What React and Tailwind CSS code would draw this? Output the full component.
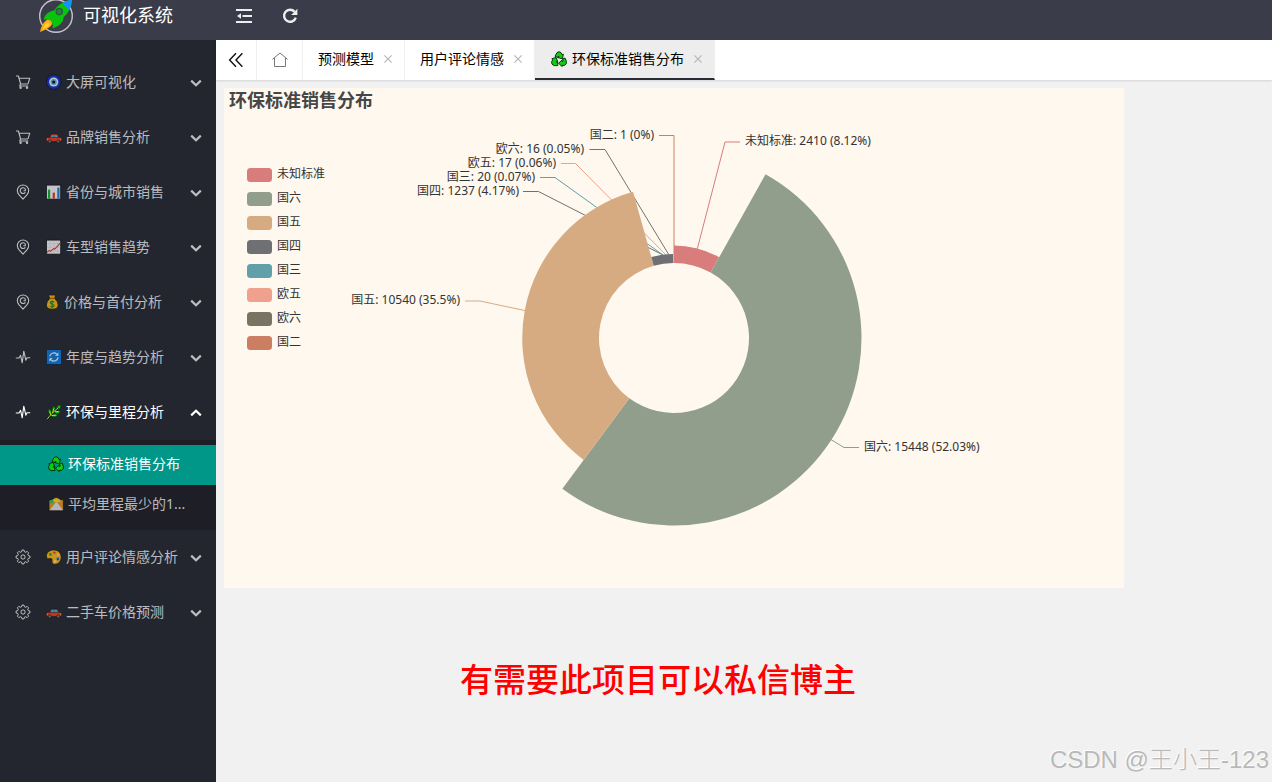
import React from "react";

function Emoji({ name, className = "" }) {
  return (
    <svg viewBox="0 0 16 16" className={`h-4 w-4 shrink-0 ${className}`} aria-hidden="true">
      {drawings[name]}
    </svg>
  );
}

const car = (
  <g stroke="#111" strokeWidth="0.6" strokeLinejoin="round">
    <path d="M3.2 8.6 L4.8 5.6 Q5.2 5 6 5 H10.6 Q11.2 5 11.7 5.6 L13.4 8.6 Z" fill="#f03a20" />
    <path d="M.4 10 Q.4 8.4 2 8.3 H13.6 Q15.7 8.6 15.7 10.6 V11.8 Q15.7 12.6 14.9 12.6 H1.2 Q.4 12.6 .4 11.8 Z" fill="#f03a20" />
    <path d="M4.8 8.2 L6 6 H7.6 V8.2 Z M8.4 8.2 V6 H10.4 L11.8 8.2 Z" fill="#25c3ee" stroke="none" />
    <circle cx="3.8" cy="12.4" r="1.5" fill="#777" />
    <circle cx="12.2" cy="12.4" r="1.5" fill="#777" />
    <path d="M.8 9.6h1.2v1H.8z M14.1 9.6h1.2v1h-1.2z" fill="#ffc83d" stroke="none" />
  </g>
);

const drawings = {
  nazar: (
    <g>
      <circle cx="7.7" cy="8" r="7.3" fill="#0d36c8" stroke="#0a0f30" strokeWidth="0.9" />
      <circle cx="7.7" cy="8" r="4.6" fill="#f4f8ff" />
      <circle cx="7.7" cy="8" r="3.1" fill="#5fb4ea" />
      <circle cx="7.7" cy="8" r="1.5" fill="#050505" />
    </g>
  ),
  car,
  bars: (
    <g>
      <rect x="0.5" y="1.1" width="14.2" height="14" fill="#fafafe" stroke="#111" strokeWidth="0.8" />
      <path d="M2 5.6h2.2v9H2z" fill="#19b52a" />
      <path d="M6.7 8.6h2.2v6H6.7z" fill="#e43b24" />
      <path d="M11.3 3.6h2.2v11h-2.2z" fill="#1d7fd4" />
    </g>
  ),
  trend: (
    <g>
      <rect x="0.5" y="1.1" width="14.2" height="14" fill="#fafafe" stroke="#111" strokeWidth="0.8" />
      <path d="M4.3 1.5v13.2M8 1.5v13.2M11.7 1.5v13.2M1 4.7h13.4M1 8.2h13.4M1 11.7h13.4" stroke="#d6d6dc" strokeWidth="0.5" />
      <path d="M1 13.4 L3.2 11.4 L4.6 12.4 L7.6 9.6 L9 9.8 L14.2 4.2" fill="none" stroke="#e43b24" strokeWidth="1.1" />
    </g>
  ),
  money: (
    <g stroke="#17120a" strokeWidth="0.8">
      <path d="M2.4 1 H9.6 L8.6 4.4 Q12.2 7.4 12.2 11 Q12.2 15.2 6.2 15.2 Q.4 15.2 .4 11 Q.4 7.4 3.8 4.4 Z" fill="#ffb80d" />
      <path d="M3.7 4.4h5" stroke="#9d6500" strokeWidth="1.2" />
      <path d="M8.1 8.3 Q7.6 7.4 6.2 7.4 Q4.4 7.4 4.4 8.8 Q4.4 10 6.2 10.2 Q8.1 10.4 8.1 11.8 Q8.1 13 6.2 13 Q4.7 13 4.2 12 M6.2 6.4v7.8" fill="none" stroke="#168a28" strokeWidth="1.1" />
    </g>
  ),
  cycle: (
    <g>
      <rect x="0.4" y="0.4" width="15" height="15" fill="#087be0" stroke="#07213c" strokeWidth="0.8" />
      <path d="M3.7 7.4 A4.3 4.3 0 0 1 10.6 4.8 M12.1 8.4 A4.3 4.3 0 0 1 5.2 11.2" fill="none" stroke="#fff" strokeWidth="1.1" />
      <path d="M12.4 3.4v3.4H9z M3.4 12.6V9.2h3.4z" fill="#fff" />
    </g>
  ),
  herb: (
    <g>
      <g fill="#13c816" stroke="#061c06" strokeWidth="0.5">
        <path d="M4.4 10.4 Q1.2 8.2 3 4.8 Q6 6.4 5.2 10 Z" />
        <path d="M7 7.8 Q5 4.4 8.2 2 Q10.2 4.6 7.8 7.6 Z" />
        <path d="M9.8 5.6 Q10.4 1.4 14.8 .8 Q15 5 10.8 6.4 Z" />
        <path d="M8.6 8.6 Q11.4 5.6 14.8 7.4 Q12.6 10.4 8.8 9.4 Z" />
        <path d="M5.8 11.6 Q8.8 8.8 12 11 Q9.6 14 5.8 12.4 Z" />
      </g>
      <path d="M1.2 15.2 Q4 10.8 12.4 3.6" fill="none" stroke="#072007" strokeWidth="1.9" />
      <path d="M1.2 15.2 Q4 10.8 12.4 3.6 M6.6 9 L7.6 5 M5.4 11.6 L9.6 11.2 M8.6 7.4L12.6 7.6 M4.6 11 L3.8 7.6" fill="none" stroke="#c8ee1b" strokeWidth="0.9" />
    </g>
  ),
  recycle: (
    <g fill="#0cd010" stroke="#042405" strokeWidth="0.9" strokeLinejoin="round">
      <path d="M4 5.2 L6 1.6 Q8 -.2 10 1.6 L11.2 3.6 L12.4 3.2 L11.4 7.8 L6.8 6.6 L8 5.8 L7.4 5 L6.6 6.6 Z" />
      <path d="M11.6 8 L14 7 L15.4 10.2 Q16 13.4 13.4 14.4 H11 V15.6 L7.6 12.2 L10.8 9.2 V10.4 L12.2 10.2 Z" />
      <path d="M6.8 14.6 H3 Q.2 13.6 .6 10.8 L1.8 8.6 L.8 7.8 L5 6.4 L6.8 10.6 L5.4 10.4 L5.2 11.2 H6.8 Z" />
    </g>
  ),
  road: (
    <g>
      <path d="M1 4 Q4 4.6 5.4 2.8 Q8.4 .4 11.2 2.8 Q12.4 4.4 15.4 3.6 V14.6 H1 Z" fill="#f09c22" stroke="#151515" strokeWidth="0.8" />
      <path d="M5 3.6 Q8.4 .8 11.6 3.6 L13 5.6 L8.6 6.6 L4 5.6 Z" fill="#ffe21a" />
      <circle cx="3.8" cy="5.6" r="1.9" fill="#35c76d" />
      <path d="M8 6.2 H8.9 L15 14.2 H1.6 Z" fill="#e8e8ef" />
    </g>
  ),
  palette: (
    <g>
      <path d="M8 .9 C3.6 .9 .4 3.6 .4 7 C.4 9.5 2.4 10.2 4 9.6 C5.6 9.2 6.3 10 6 11.6 C5.7 13.6 6.3 15.4 8.8 15.3 C12.5 15.2 15.2 12 15.2 8.2 C15.2 4 12.3 .9 8 .9 Z" fill="#ffba1a" stroke="#241800" strokeWidth="0.8" />
      <circle cx="8.4" cy="3.6" r="1.2" fill="#e3372b" />
      <circle cx="4.4" cy="5.5" r="1.4" fill="#16b33a" />
      <circle cx="11.9" cy="10" r="1.4" fill="#165ae0" />
      <circle cx="12" cy="5.8" r="1" fill="#ffe08a" />
      <circle cx="9" cy="12.4" r="1.2" fill="#f7e7bf" />
    </g>
  ),
};

const glyphs = {
  cart: <path d="M1 2h2.4l2.2 8h7.4M3.8 4.2h11l-1.8 5.6M5.6 10l-1 2h8.6" />,
  pin: (
    <g>
      <path d="M8 15.2 L3.9 10.6 Q2.3 8.6 2.3 6.6 A5.7 5.6 0 0 1 13.7 6.6 Q13.7 8.6 12.1 10.6 Z" />
      <path d="M10.4 4.8 A2.9 2.9 0 1 0 10.4 8.4 M10.3 5v1.8H8.4" />
    </g>
  ),
  pulse: <path d="M.8 9h3.2L5.6 6.4 7.2 13.8 8.8 2.2 10.8 11.2 12 8.8H15.2" />,
  gear: (
    <g>
      <path d="M6.9 1.2h2.2l.5 1.9 1.3.6 1.8-1 1.6 1.6-1 1.8.6 1.3 1.9.5v2.2l-1.9.5-.6 1.3 1 1.8-1.6 1.6-1.8-1-1.3.6-.5 1.9H6.9l-.5-1.9-1.3-.6-1.8 1-1.6-1.6 1-1.8-.6-1.3L.2 10.1V7.9l1.9-.5.6-1.3-1-1.8 1.6-1.6 1.8 1 1.3-.6z" />
      <circle cx="8" cy="9" r="2.4" />
    </g>
  ),
};

function Glyph({ name }) {
  return (
    <svg
      viewBox={name === "gear" ? "-0.5 0 17 18" : "0 0 16 16"}
      className="h-4 w-4 shrink-0"
      fill="none"
      stroke="currentColor"
      strokeWidth="1.1"
      strokeLinejoin="round"
      aria-hidden="true"
    >
      {glyphs[name]}
      {name === "cart" && (
        <g fill="currentColor" stroke="none">
          <circle cx="5.6" cy="13.8" r="1.2" />
          <circle cx="12" cy="13.8" r="1.2" />
        </g>
      )}
    </svg>
  );
}

const menu = [
  { icon: "cart", emoji: "nazar", label: "大屏可视化" },
  { icon: "cart", emoji: "car", label: "品牌销售分析" },
  { icon: "pin", emoji: "bars", label: "省份与城市销售" },
  { icon: "pin", emoji: "trend", label: "车型销售趋势" },
  { icon: "pin", emoji: "money", label: "价格与首付分析" },
  { icon: "pulse", emoji: "cycle", label: "年度与趋势分析" },
  {
    icon: "pulse",
    emoji: "herb",
    label: "环保与里程分析",
    open: true,
    children: [
      { emoji: "recycle", label: "环保标准销售分布", active: true },
      { emoji: "road", label: "平均里程最少的1..." },
    ],
  },
  { icon: "gear", emoji: "palette", label: "用户评论情感分析" },
  { icon: "gear", emoji: "car", label: "二手车价格预测" },
];

function MenuItem({ item }) {
  return (
    <li>
      <button
        type="button"
        aria-expanded={!!item.open}
        className={`flex h-[55px] w-full items-center pr-[14px] pb-[2px] pl-[15px] text-left ${item.open ? "text-white" : "text-white/70"}`}
      >
        <Glyph name={item.icon} />
        <Emoji name={item.emoji} className={`ml-[15px] ${item.open ? "" : "opacity-75"}`} />
        <span className={`flex-1 whitespace-nowrap ${item.emoji === "money" ? "ml-[2px]" : "ml-1"}`}>{item.label}</span>
        <svg viewBox="0 0 12 12" className="h-3 w-3 shrink-0" fill="none" stroke="currentColor" strokeWidth="2.2" aria-hidden="true">
          <path d={item.open ? "M1.2 9.4 L6 4.8 L10.8 9.4" : "M1.2 4.6 L6 9.2 L10.8 4.6"} />
        </svg>
      </button>
      {item.children && (
        <ul className="bg-[#1e1e26] py-[5px]">
          {item.children.map((child) => (
            <li key={child.label}>
              <a
                href="#"
                className={`flex h-10 items-center gap-1 pb-[2px] pl-12 ${child.active ? "bg-[#009688] text-white" : "text-white/70"}`}
              >
                <Emoji name={child.emoji} className={child.active ? "" : "opacity-75"} />
                <span className="whitespace-nowrap">{child.label}</span>
              </a>
            </li>
          ))}
        </ul>
      )}
    </li>
  );
}

function Logo() {
  return (
    <svg viewBox="0 0 36 36" className="h-9 w-9 shrink-0" aria-hidden="true">
      <circle cx="18" cy="18" r="16.3" fill="none" stroke="#c4c4ca" strokeWidth="1.4" />
      <path d="M5.5 21.6 Q7.5 14 16 12.6 Q22 3.6 34 1.6 Q33.4 12.6 25.6 19.2 Q25.4 26.4 14.8 30.6 L14.6 25.6 L11 21.4 Z" fill="#0ac30c" />
      <path d="M24 5.2 Q28.4 2.4 34 1.6 Q33.8 7.6 30.8 12.6 Q28.6 8.2 24 5.2 Z" fill="#1593f3" />
      <circle cx="21.3" cy="13.6" r="3.1" fill="#2f7d4a" stroke="#246038" strokeWidth="1.4" />
      <path d="M9.4 21.4 Q13.6 21.6 14.2 26 Q12.4 30.2 2 34 Q3.6 25 9.4 21.4 Z" fill="#ffab14" />
      <path d="M8.8 24.6 Q11.2 24.8 11.6 27 Q9.6 29.8 4.8 31.4 Q6 27 8.8 24.6 Z" fill="#ffd22c" />
    </svg>
  );
}

function CloseButton({ label }) {
  return (
    <button type="button" aria-label={`关闭${label}`} className="text-[#b4b4b4]">
      <svg viewBox="0 0 8 8" className="h-2 w-2" fill="none" stroke="currentColor" strokeWidth="1.1">
        <path d="M.4 .4 L7.6 7.6 M7.6 .4 L.4 7.6" />
      </svg>
    </button>
  );
}

function Tab({ label, emoji, active }) {
  return (
    <li
      className={`flex items-center gap-[10px] border-r border-[#f0f0f0] pr-3 pl-[15px] ${
        active ? "border-b-2 border-b-[#292b34] bg-[#ededed]" : "pb-[2px]"
      }`}
    >
      <a href="#" className="flex items-center gap-[5px] whitespace-nowrap text-black">
        {emoji && <Emoji name={emoji} className="ml-px" />}
        {label}
      </a>
      <CloseButton label={label} />
    </li>
  );
}

const series = [
  { name: "未知标准", value: 2410, pct: "8.12%", color: "#d87c7c", line: "697,250 725,142 740,142", tx: 745, ty: 145 },
  { name: "国六", value: 15448, pct: "52.03%", color: "#919e8b", line: "830,439 844,447.5 859,447.5", tx: 864, ty: 451 },
  { name: "国五", value: 10540, pct: "35.5%", color: "#d7ab82", line: "527,311 480,301 465,301", tx: 460, ty: 304, end: true },
  { name: "国四", value: 1237, pct: "4.17%", color: "#6e7074", line: "663,255 538.5,191.5 523,191.5", tx: 519, ty: 195, end: true },
  { name: "国三", value: 20, pct: "0.07%", color: "#61a0a8", line: "663,255 555,177.5 540,177.5", tx: 535, ty: 181, end: true },
  { name: "欧五", value: 17, pct: "0.06%", color: "#efa18d", line: "666,255 575.5,163.5 561,163.5", tx: 556, ty: 167, end: true },
  { name: "欧六", value: 16, pct: "0.05%", color: "#787464", line: "669,255 605,149.5 589.5,149.5", tx: 584, ty: 153, end: true },
  { name: "国二", value: 1, pct: "0%", color: "#cc7e63", line: "674,263 674,135.5 659,135.5", tx: 654, ty: 139, end: true },
];

const total = series.reduce((sum, s) => sum + s.value, 0);
const largest = Math.max(...series.map((s) => s.value));
const CX = 674;
const CY = 338;
const INNER = 75;
const OUTER = 187.5;

function sector(start, end, radius) {
  const at = (a, r) => `${(CX + r * Math.sin(a)).toFixed(2)} ${(CY - r * Math.cos(a)).toFixed(2)}`;
  const large = end - start > Math.PI ? 1 : 0;
  return `M${at(start, INNER)} L${at(start, radius)} A${radius} ${radius} 0 ${large} 1 ${at(end, radius)} L${at(end, INNER)} A${INNER} ${INNER} 0 ${large} 0 ${at(start, INNER)} Z`;
}

let angle = 0;
const slices = series.map((s) => {
  const start = angle;
  angle += (s.value / total) * Math.PI * 2;
  return { color: s.color, name: s.name, d: sector(start, angle, INNER + ((OUTER - INNER) * s.value) / largest) };
});

function RoseChart() {
  return (
    <svg viewBox="224 88 900 500" className="block w-full max-w-[900px] overflow-visible bg-[#fef8ef]" role="img" aria-label="环保标准销售分布">
      <text x="229" y="107" fontSize="18" fontWeight="700" fill="#464646">
        环保标准销售分布
      </text>
      {series.map((s, i) => (
        <g key={s.name}>
          <rect x="247" y={168 + i * 24} width="25" height="14" rx="3.5" fill={s.color} />
          <text x="277" y={178 + i * 24} fontSize="12" fill="#333">
            {s.name}
          </text>
        </g>
      ))}
      {series.map((s) => (
        <polyline key={s.name} points={s.line} fill="none" stroke={s.color} strokeWidth="1" />
      ))}
      {slices.map((s) => (
        <path key={s.name} d={s.d} fill={s.color} />
      ))}
      {series.map((s) => (
        <text key={s.name} x={s.tx} y={s.ty} fontSize="12" fill="#333" textAnchor={s.end ? "end" : "start"}>
          {`${s.name}: ${s.value} (${s.pct})`}
        </text>
      ))}
    </svg>
  );
}

export default function App() {
  return (
    <div className="flex min-h-screen flex-col bg-[#f1f1f1] font-['Noto_Sans','Noto_Sans_CJK_SC',sans-serif] text-sm">
      <header className="flex h-10 items-center bg-[#3b3c49] pb-2 text-white">
        <div className="flex w-[216px] shrink-0 items-center gap-[9px] pl-[38px]">
          <Logo />
          <h1 className="pb-[2px] text-lg leading-6 whitespace-nowrap">可视化系统</h1>
        </div>
        <nav className="flex items-center gap-[30px] pb-px pl-5">
          <button type="button" aria-label="收起菜单">
            <svg viewBox="0 0 16 16" className="h-4 w-4" fill="none" stroke="#eee" strokeWidth="2" aria-hidden="true">
              <path d="M0 2h16M6.5 8H16M0 14h16" />
              <path d="M1 8 L5 5.2 V10.8 Z" fill="#eee" stroke="none" />
            </svg>
          </button>
          <button type="button" aria-label="刷新">
            <svg viewBox="0 0 16 16" className="h-4 w-4" fill="none" stroke="#eee" strokeWidth="2.4" aria-hidden="true">
              <path d="M12.6 3.8 A6 6 0 1 0 13.8 9.6" />
              <path d="M15.4 .8 V7 H9.2 Z" fill="#eee" stroke="none" />
            </svg>
          </button>
        </nav>
      </header>

      <div className="flex flex-1">
        <aside className="w-[216px] shrink-0 bg-[#24262f] pt-[15px]">
          <ul>
            {menu.map((item) => (
              <MenuItem key={item.label} item={item} />
            ))}
          </ul>
        </aside>

        <div className="flex min-w-0 flex-1 flex-col">
          <div className="flex h-10 bg-white shadow-[0_1px_2px_rgba(0,0,0,0.12)]">
            <button type="button" aria-label="向左滚动" className="flex w-[41px] items-center justify-center border-r border-[#f0f0f0]">
              <svg viewBox="0 0 16 16" className="h-4 w-4" fill="none" stroke="#111" strokeWidth="1.4" aria-hidden="true">
                <path d="M8 1.2 L1.6 8 L8 14.8 M14.4 1.2 L8 8 L14.4 14.8" />
              </svg>
            </button>
            <a href="#" aria-label="首页" className="flex w-[46px] items-center justify-center border-r border-[#f0f0f0]">
              <svg viewBox="0 0 16 16" className="h-4 w-4" fill="none" stroke="#777" strokeWidth="1" aria-hidden="true">
                <path d="M.4 7.4 L8 1 L15.6 7.4 M2.5 6 V14.5 H13.5 V6" />
              </svg>
            </a>
            <ul className="flex">
              <Tab label="预测模型" />
              <Tab label="用户评论情感" />
              <Tab label="环保标准销售分布" emoji="recycle" active />
            </ul>
          </div>

          <main className="flex flex-1 flex-col pt-2">
            <div className="pl-2">
              <RoseChart />
            </div>
            <p className="pt-[66px] pl-[244px] font-['Noto_Sans_CJK_SC',serif] text-[33px] leading-[48px] font-medium whitespace-nowrap text-[#ff0000]">
              有需要此项目可以私信博主
            </p>
            <p className="mt-auto self-end pr-[3px] pb-1 font-['Liberation_Sans','Noto_Sans_CJK_SC',sans-serif] text-2xl leading-9 font-light whitespace-nowrap text-[#b9b9b9] [text-shadow:-1px_-1px_0_#ffffff]">
              CSDN @王小王-123
            </p>
          </main>
        </div>
      </div>
    </div>
  );
}
